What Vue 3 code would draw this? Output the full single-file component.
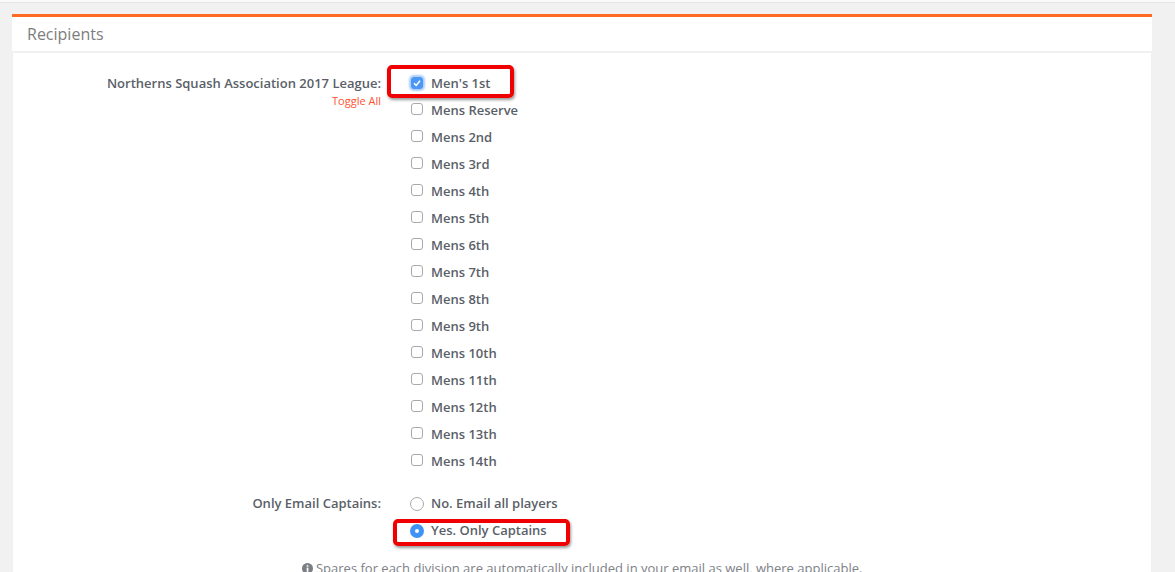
<script setup>
const divisions = ["Men's 1st", 'Mens Reserve', 'Mens 2nd', 'Mens 3rd', 'Mens 4th', 'Mens 5th', 'Mens 6th', 'Mens 7th', 'Mens 8th', 'Mens 9th', 'Mens 10th', 'Mens 11th', 'Mens 12th', 'Mens 13th', 'Mens 14th']
</script>

<template>
  <div class="page">
    <section class="panel">
      <header class="panel-head">Recipients</header>
      <div class="panel-body">
        <div class="form-row">
          <div class="label-col">
            <div class="label">Northerns Squash Association 2017 League:</div>
            <a class="toggle">Toggle All</a>
          </div>
          <div class="options">
            <div v-for="(d, i) in divisions" :key="d" class="option">
              <span v-if="i === 0" class="check on">
                <svg width="10" height="10" viewBox="0 0 10 10"><path d="M2 5.2 4.2 7.4 8 2.8" fill="none" stroke="#fff" stroke-width="1.5" /></svg>
              </span>
              <span v-else class="check"></span>
              <span class="opt-text">{{ d }}</span>
              <span v-if="i === 0" class="highlight hl-check"></span>
            </div>
          </div>
        </div>
        <div class="form-row radios">
          <div class="label-col">
            <div class="label">Only Email Captains:</div>
          </div>
          <div class="options">
            <div class="option">
              <span class="radio"></span>
              <span class="opt-text">No. Email all players</span>
            </div>
            <div class="option">
              <span class="radio on"></span>
              <span class="opt-text">Yes. Only Captains</span>
              <span class="highlight hl-radio"></span>
            </div>
          </div>
        </div>
        <p class="note">
          <svg class="info" width="11" height="11" viewBox="0 0 11 11"><circle cx="5.5" cy="5.5" r="5.5" fill="#7b7f85" /><rect x="4.7" y="4.6" width="1.7" height="4.2" fill="#fff" /><rect x="4.7" y="2.2" width="1.7" height="1.5" fill="#fff" /></svg>
          Spares for each division are automatically included in your email as well, where applicable.
        </p>
      </div>
    </section>
  </div>
</template>

<style>
html, body { margin: 0; overflow: hidden; }
</style>

<style scoped>
.page {
  box-sizing: border-box;
  height: 572px;
  overflow: hidden;
  padding: 14px 23px 0 12px;
  background: linear-gradient(#fafafa 0 2px, #e4e4e4 2px 3px, #f1f1f1 3px);
  font-family: "Open Sans", sans-serif;
  color: #5a5f69;
}
.panel {
  border-top: 3px solid #ff6a22;
}
.panel-head {
  box-sizing: border-box;
  height: 36px;
  padding: 7px 15px 0;
  background: #fff;
  border-bottom: 2px solid #f0f0f0;
  font-size: 16px;
  line-height: 21px;
  color: #7d7d7d;
}
.panel-body {
  height: 600px;
  padding-top: 17px;
  margin: 0 1px;
  background: #fff;
}
.form-row {
  display: flex;
  align-items: flex-start;
}
.radios {
  margin-top: 15px;
}
.label-col {
  box-sizing: border-box;
  width: 368px;
  text-align: right;
}
.label {
  font-size: 13px;
  font-weight: 600;
  line-height: 27px;
}
.toggle {
  display: block;
  margin-top: -3px;
  font-size: 11px;
  line-height: 14px;
  color: #ff5230;
}
.options {
  margin-left: 30px;
}
.option {
  position: relative;
  display: flex;
  align-items: center;
  height: 27px;
  font-size: 13px;
  font-weight: 600;
  white-space: nowrap;
}
.check {
  box-sizing: border-box;
  width: 12px;
  height: 12px;
  margin-right: 8px;
  margin-top: -4px;
  border: 1px solid #a9a9a9;
  border-radius: 3px;
  background: #fff;
  display: flex;
  align-items: center;
  justify-content: center;
}
.check.on {
  margin-top: -2px;
  border-color: #4a97f5;
  background: #4a97f5;
  box-shadow: 0 0 2px 2px #a9cdf8;
}
.radio {
  box-sizing: border-box;
  width: 14px;
  height: 14px;
  margin-left: -1px;
  margin-right: 7px;
  border: 1px solid #a9a9a9;
  border-radius: 50%;
  background: #fff;
}
.radio.on {
  border: 5px solid #3f93f5;
}
.opt-text {
  position: relative;
  top: -0.5px;
}
.highlight {
  position: absolute;
  box-sizing: border-box;
  border: 4px solid #f00000;
  border-radius: 5px;
  box-shadow: 1px 2px 3px rgba(0, 0, 0, 0.4);
  pointer-events: none;
}
.hl-check {
  left: -24px;
  top: -5px;
  width: 127px;
  height: 33px;
}
.hl-radio {
  left: -18px;
  top: 2px;
  width: 177px;
  height: 27px;
}
.note {
  margin: 14px 0 0;
  text-align: center;
  font-size: 13px;
  line-height: 20px;
  color: #7d8187;
  white-space: nowrap;
}
.info {
  vertical-align: -1px;
}
</style>
